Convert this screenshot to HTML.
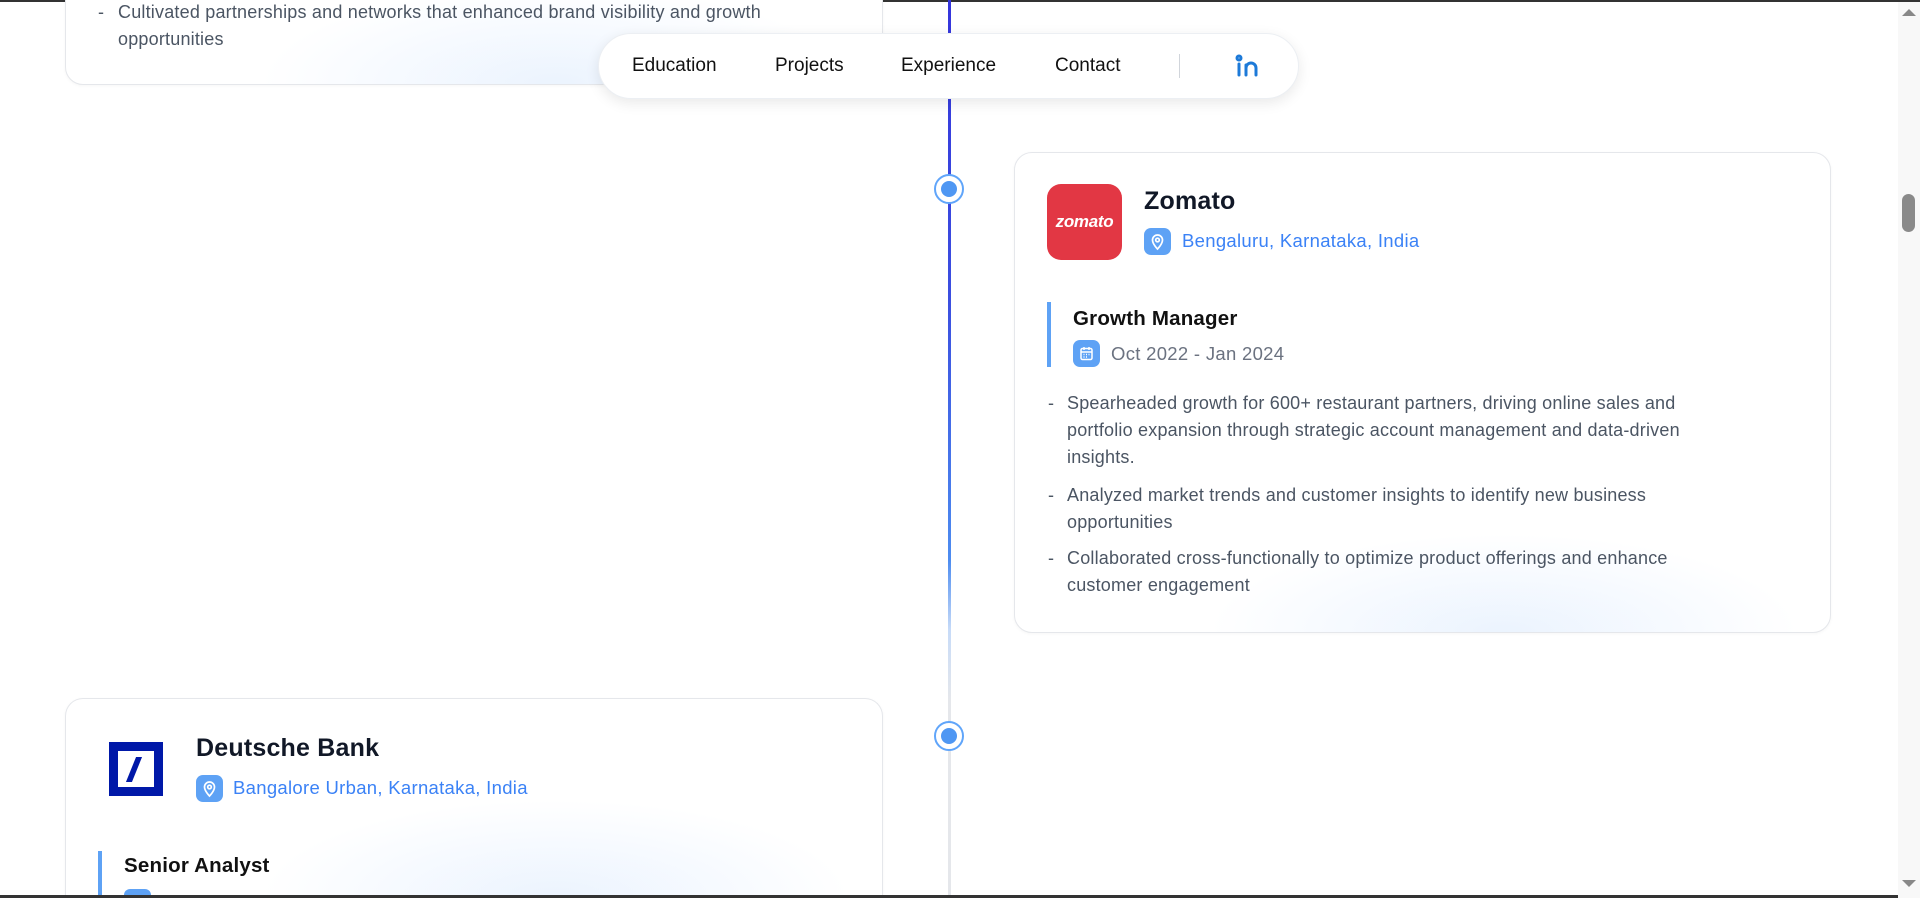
<!DOCTYPE html>
<html><head><meta charset="utf-8"><style>
*{margin:0;padding:0;box-sizing:border-box}
html,body{width:1920px;height:898px;overflow:hidden;background:#fff;font-family:"Liberation Sans",Arial,sans-serif}
#root{position:relative;width:1920px;height:898px;overflow:hidden}
.abs{position:absolute}
.card{position:absolute;border:1px solid #e5e7eb;border-radius:18px;background:radial-gradient(ellipse 420px 140px at 60% 100%,rgba(219,234,254,.55),rgba(255,255,255,0) 70%),#fff;box-shadow:0 1px 3px rgba(0,0,0,.04)}
.txt{font-size:18px;color:#4b5563;line-height:27px;letter-spacing:.2px}
.dot{position:absolute;width:30px;height:30px;border-radius:50%;border:2px solid #60a5fa;background:#fff}
.dot::after{content:"";position:absolute;left:5px;top:5px;width:16px;height:16px;border-radius:50%;background:#4f97f3}
.ico{position:absolute;width:27px;height:27px;border-radius:7px;background:#5ea2f5}
.nav span{position:absolute;top:21px;font-size:19px;color:#111}
</style></head><body><div id="root">
<div class="abs" style="left:0;top:0;width:1920px;height:2px;background:#333"></div>
<div class="abs" style="left:948px;top:0;width:3px;height:895px;background:linear-gradient(#3535dc 0px,#3b4fe0 300px,#4d8cf0 560px,#c7dbf8 630px,#e5e7eb 700px,#e5e7eb 895px)"></div>
<div class="dot" style="left:934px;top:174px"></div>
<div class="dot" style="left:934px;top:721px"></div>
<div class="card" style="left:65px;top:-40px;width:818px;height:125px;"></div>
<div class="abs txt" style="left:98px;top:-1px">-</div>
<div class="abs txt" style="left:118px;top:-1px">Cultivated partnerships and networks that enhanced brand visibility and growth<br>opportunities</div>
<div class="abs nav" style="left:598px;top:33px;width:701px;height:66px;border-radius:33px;background:#fff;border:1px solid #eceff3;box-shadow:0 4px 14px rgba(0,0,0,.09)">
<span style="left:33px">Education</span>
<span style="left:176px">Projects</span>
<span style="left:302px">Experience</span>
<span style="left:456px">Contact</span>
<div class="abs" style="left:580px;top:20px;width:1px;height:24px;background:#d1d5db"></div>
<svg class="abs" style="left:636px;top:20px" width="26" height="24" viewBox="0 0 26 24" fill="none" stroke="#1d7ad8" stroke-width="3" stroke-linecap="round"><circle cx="4" cy="4" r="2"/><path d="M4 10v11M11 21V14a5 5 0 0 1 10 0v7M11 14v-3"/></svg>
</div>
<div class="card" style="left:1014px;top:152px;width:817px;height:481px"></div>
<div class="abs" style="left:1047px;top:184px;width:75px;height:76px;border-radius:14px;background:#e23744;color:#fff;font-weight:bold;font-style:italic;font-size:17px;line-height:76px;text-align:center;letter-spacing:-.3px">zomato</div>
<div class="abs" style="left:1144px;top:187px;font-size:25px;font-weight:bold;color:#111827;letter-spacing:.2px">Zomato</div>
<div class="ico" style="left:1144px;top:228px"><svg width="27" height="27" viewBox="0 0 27 27" fill="none" stroke="#fff" stroke-width="1.7"><path d="M13.5 21s-5-5-5-9a5 5 0 0 1 10 0c0 4-5 9-5 9z"/><circle cx="13.5" cy="12" r="1.8"/></svg></div>
<div class="abs" style="left:1182px;top:230px;font-size:18.5px;color:#3b82f6;letter-spacing:.3px">Bengaluru, Karnataka, India</div>
<div class="abs" style="left:1047px;top:302px;width:4px;height:65px;background:#5ea2f5"></div>
<div class="abs" style="left:1073px;top:307px;font-size:20.5px;font-weight:bold;color:#111;letter-spacing:.2px">Growth Manager</div>
<div class="ico" style="left:1073px;top:340px"><svg width="27" height="27" viewBox="0 0 27 27" fill="none" stroke="#fff" stroke-width="1.5"><rect x="8" y="8.5" width="11" height="11" rx="1.5"/><path d="M8 12h11M11 7v3M16 7v3M10.5 14.5h1M13 14.5h1M15.5 14.5h1M10.5 17h1M13 17h1"/></svg></div>
<div class="abs" style="left:1111px;top:343px;font-size:18.5px;color:#6b7280;letter-spacing:.3px">Oct 2022 - Jan 2024</div>
<div class="abs txt" style="left:1048px;top:390px">-</div>
<div class="abs txt" style="left:1067px;top:390px;width:700px">Spearheaded growth for 600+ restaurant partners, driving online sales and<br>portfolio expansion through strategic account management and data-driven<br>insights.</div>
<div class="abs txt" style="left:1048px;top:482px">-</div>
<div class="abs txt" style="left:1067px;top:482px;width:700px">Analyzed market trends and customer insights to identify new business<br>opportunities</div>
<div class="abs txt" style="left:1048px;top:545px">-</div>
<div class="abs txt" style="left:1067px;top:545px;width:720px">Collaborated cross-functionally to optimize product offerings and enhance<br>customer engagement</div>
<div class="card" style="left:65px;top:698px;width:818px;height:200px;border-bottom:none;border-radius:18px 18px 0 0"></div>
<div class="abs" style="left:109px;top:742px;width:54px;height:54px;border:9px solid #0018a8;background:#fff"><div class="abs" style="left:13px;top:6px;width:6px;height:25px;background:#0018a8;transform:skewX(-22deg)"></div></div>
<div class="abs" style="left:196px;top:734px;font-size:25px;font-weight:bold;color:#111827;letter-spacing:.2px">Deutsche Bank</div>
<div class="ico" style="left:196px;top:775px"><svg width="27" height="27" viewBox="0 0 27 27" fill="none" stroke="#fff" stroke-width="1.7"><path d="M13.5 21s-5-5-5-9a5 5 0 0 1 10 0c0 4-5 9-5 9z"/><circle cx="13.5" cy="12" r="1.8"/></svg></div>
<div class="abs" style="left:233px;top:777px;font-size:18.5px;color:#3b82f6;letter-spacing:.3px">Bangalore Urban, Karnataka, India</div>
<div class="abs" style="left:98px;top:851px;width:4px;height:44px;background:#5ea2f5"></div>
<div class="abs" style="left:124px;top:854px;font-size:20.5px;font-weight:bold;color:#111;letter-spacing:.2px">Senior Analyst</div>
<div class="ico" style="left:124px;top:889px;height:6px;border-radius:7px 7px 0 0"></div>
<div class="abs" style="left:1898px;top:2px;width:22px;height:896px;background:#f8f8f8"></div>
<div class="abs" style="left:1902px;top:9px;width:0;height:0;border-left:7px solid transparent;border-right:7px solid transparent;border-bottom:7px solid #888"></div>
<div class="abs" style="left:1902px;top:194px;width:13px;height:38px;border-radius:7px;background:#8a8a8a"></div>
<div class="abs" style="left:1902px;top:880px;width:0;height:0;border-left:7px solid transparent;border-right:7px solid transparent;border-top:7px solid #888"></div>
<div class="abs" style="left:0;top:895px;width:1898px;height:3px;background:#333"></div>
</div></body></html>
